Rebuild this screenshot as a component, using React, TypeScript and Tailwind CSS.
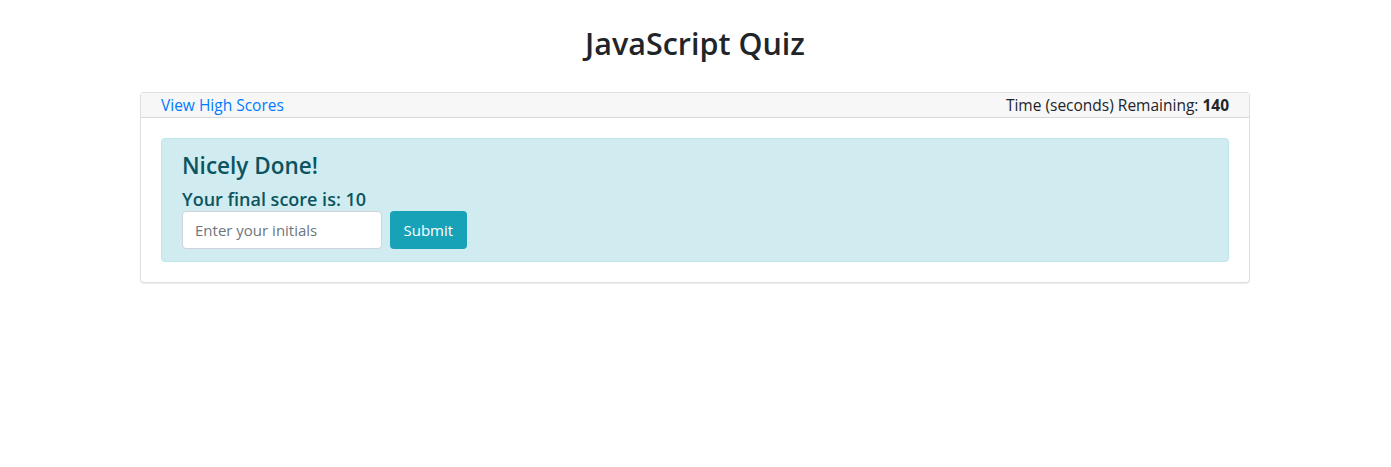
export default function App() {
  return (
    <div
      className="min-h-[467px] bg-white text-[#212529]"
      style={{ fontFamily: '"Open Sans", "Noto Sans", Arial, sans-serif' }}
    >
      <div className="ml-[125px] w-[1140px] px-[15px] pt-6">
        <h2 className="mb-[30px] text-center text-[30.5px] leading-[38px] font-semibold">
          JavaScript Quiz
        </h2>

        <div className="rounded border border-black/[0.125] bg-white shadow-[0_1px_1px_rgba(0,0,0,0.08)]">
          <div className="flex items-center justify-between border-b border-black/[0.125] bg-[#f7f7f7] px-5 text-[15.5px] leading-6">
            <a href="#" className="text-[#007bff] hover:underline">
              View High Scores
            </a>
            <span>
              Time (seconds) Remaining: <span className="font-bold">140</span>
            </span>
          </div>

          <div className="p-5">
            <div className="rounded border border-[#bee5eb] bg-[#d1ecf1] px-5 pt-[13px] pb-3 text-[#0c5460]">
              <h4 className="mb-2 text-[22.5px] leading-[28px] font-semibold">Nicely Done!</h4>
              <h5 className="text-[18px] leading-[23px] font-semibold">Your final score is: 10</h5>
              <div className="flex items-center gap-2">
                <input
                  type="text"
                  placeholder="Enter your initials"
                  className="h-[38px] w-[200px] rounded border border-[#ced4da] bg-white px-3 text-[15px] text-[#495057] placeholder:text-[#6c757d] focus:outline-none"
                />
                <button
                  type="button"
                  className="h-[38px] rounded bg-[#17a2b8] px-[13.5px] text-[15px] text-white hover:bg-[#138496]"
                >
                  Submit
                </button>
              </div>
            </div>
          </div>
        </div>
      </div>
    </div>
  );
}
